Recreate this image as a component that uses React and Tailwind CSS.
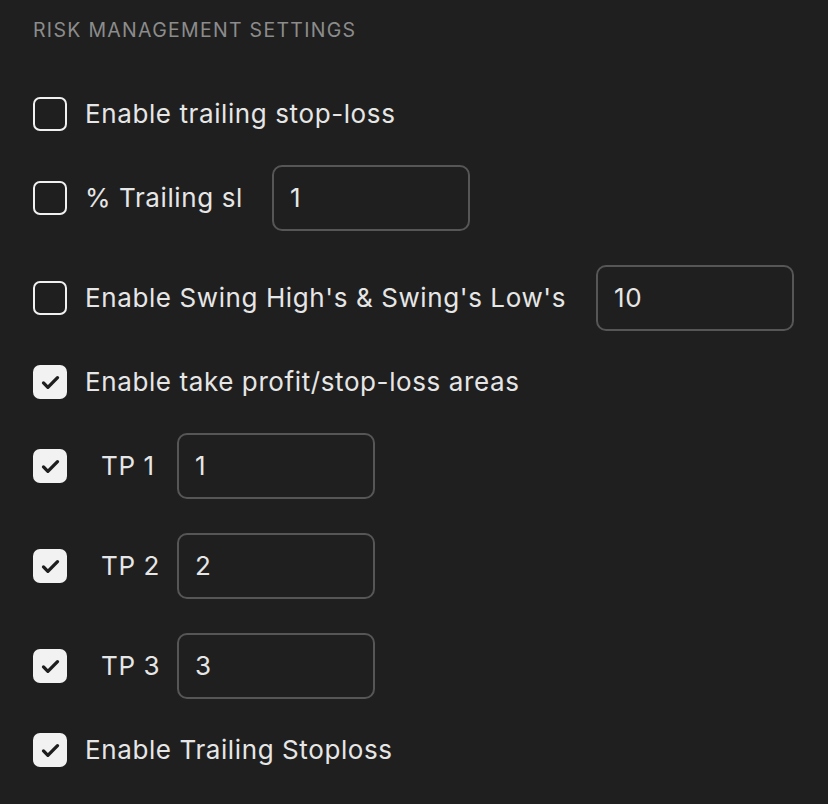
import React from 'react';

const font = { fontFamily: 'Inter, "Noto Sans", sans-serif' };

function Box({ checked }) {
  return checked ? (
    <div className="w-[34px] h-[34px] shrink-0 rounded-[7px] bg-[#f2f2f2] flex items-center justify-center">
      <svg width="21" height="21" viewBox="0 0 24 24" fill="none" stroke="#1f1f1f" strokeWidth="3.8" strokeLinecap="round" strokeLinejoin="round">
        <path d="M4 12.5l5 5L20 6.5" />
      </svg>
    </div>
  ) : (
    <div className="w-[34px] h-[34px] shrink-0 rounded-[7px] border-2 border-[#f0f0f0]" />
  );
}

function Field({ value }) {
  return (
    <div className="w-[198px] h-[66px] shrink-0 rounded-[10px] border-2 border-[#565656] flex items-center pl-[16px] text-[26px] text-[#e6e6e6]">
      {value}
    </div>
  );
}

export default function App() {
  return (
    <div className="w-[828px] h-[804px] bg-[#1f1f1f] text-[#e6e6e6] overflow-hidden" style={font}>
      <div className="pl-[33px] pt-[18px]">
        <h2 className="text-[19.5px] leading-[24px] text-[#8c8c8c] tracking-[1.3px]">RISK MANAGEMENT SETTINGS</h2>

        <div className="mt-[55px] flex flex-col gap-[34px] text-[26px] leading-[34px] tracking-[0.6px]">
          <div className="flex items-center gap-[18px]">
            <Box />
            <span>Enable trailing stop-loss</span>
          </div>

          <div className="flex items-center">
            <Box />
            <span className="ml-[18px] mr-[29px]">% Trailing sl</span>
            <Field value="1" />
          </div>

          <div className="flex items-center">
            <Box />
            <span className="ml-[18px] mr-[30px]">Enable Swing High's &amp; Swing's Low's</span>
            <Field value="10" />
          </div>

          <div className="flex items-center gap-[18px]">
            <Box checked />
            <span>Enable take profit/stop-loss areas</span>
          </div>

          {['1', '2', '3'].map((n) => (
            <div key={n} className="flex items-center">
              <Box checked />
              <span className="ml-[34px] w-[76px]">TP {n}</span>
              <Field value={n} />
            </div>
          ))}

          <div className="flex items-center gap-[18px]">
            <Box checked />
            <span>Enable Trailing Stoploss</span>
          </div>
        </div>
      </div>
    </div>
  );
}
